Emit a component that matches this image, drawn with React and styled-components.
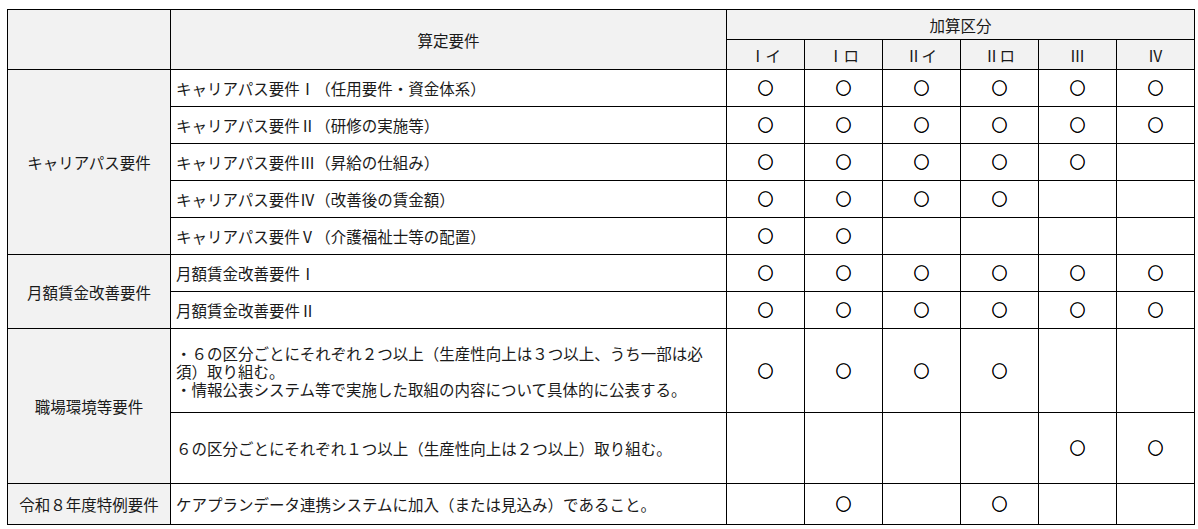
import styled, { createGlobalStyle } from "styled-components";

const GlobalStyle = createGlobalStyle`
  body {
    margin: 0;
    background: #fff;
    font-family: "Noto Sans CJK JP", "Noto Sans", sans-serif;
    color: #1a1a1a;
  }
`;

const COLS = ["Ⅰイ", "Ⅰロ", "Ⅱイ", "Ⅱロ", "Ⅲ", "Ⅳ"];

// marks: indexes of the 加算区分 columns that get a ○
const GROUPS = [
  {
    name: "キャリアパス要件",
    items: [
      { text: "キャリアパス要件Ⅰ（任用要件・資金体系）", marks: [0, 1, 2, 3, 4, 5] },
      { text: "キャリアパス要件Ⅱ（研修の実施等）", marks: [0, 1, 2, 3, 4, 5] },
      { text: "キャリアパス要件Ⅲ（昇給の仕組み）", marks: [0, 1, 2, 3, 4] },
      { text: "キャリアパス要件Ⅳ（改善後の賃金額）", marks: [0, 1, 2, 3] },
      { text: "キャリアパス要件Ⅴ（介護福祉士等の配置）", marks: [0, 1] },
    ],
  },
  {
    name: "月額賃金改善要件",
    items: [
      { text: "月額賃金改善要件Ⅰ", marks: [0, 1, 2, 3, 4, 5] },
      { text: "月額賃金改善要件Ⅱ", marks: [0, 1, 2, 3, 4, 5] },
    ],
  },
  {
    name: "職場環境等要件",
    items: [
      {
        text: [
          "・６の区分ごとにそれぞれ２つ以上（生産性向上は３つ以上、うち一部は必須）取り組む。",
          "・情報公表システム等で実施した取組の内容について具体的に公表する。",
        ],
        marks: [0, 1, 2, 3],
        h: 84,
      },
      {
        text: "６の区分ごとにそれぞれ１つ以上（生産性向上は２つ以上）取り組む。",
        marks: [4, 5],
        h: 71,
      },
    ],
  },
  {
    name: "令和８年度特例要件",
    items: [
      { text: "ケアプランデータ連携システムに加入（または見込み）であること。", marks: [1, 3], h: 41 },
    ],
  },
];

function App() {
  return (
    <Wrap>
      <GlobalStyle />
      <Table>
        <colgroup>
          <col style={{ width: 163 }} />
          <col style={{ width: 556 }} />
          {COLS.map((c) => (
            <col key={c} style={{ width: 78 }} />
          ))}
        </colgroup>
        <thead>
          <Row $h={30}>
            <HeadCell rowSpan={2} />
            <HeadCell rowSpan={2}>算定要件</HeadCell>
            <HeadCell colSpan={6}>加算区分</HeadCell>
          </Row>
          <Row $h={30}>
            {COLS.map((c) => (
              <HeadCell key={c}>{c}</HeadCell>
            ))}
          </Row>
        </thead>
        <tbody>
          {GROUPS.map((g) =>
            g.items.map((it, i) => (
              <Row key={g.name + i} $h={it.h || 37}>
                {i === 0 && <GroupCell rowSpan={g.items.length}>{g.name}</GroupCell>}
                <ItemCell>
                  {Array.isArray(it.text)
                    ? it.text.map((t) => <Line key={t}>{t}</Line>)
                    : it.text}
                </ItemCell>
                {COLS.map((c, j) => (
                  <MarkCell key={c}>{it.marks.includes(j) ? <Mark>○</Mark> : ""}</MarkCell>
                ))}
              </Row>
            ))
          )}
        </tbody>
      </Table>
    </Wrap>
  );
}

export default App;

const Wrap = styled.div`
  padding: 9px 0 0 7px;
`;

const Table = styled.table`
  border-collapse: collapse;
  table-layout: fixed;
  width: 1187px;
  font-size: 15.5px;
  line-height: 18px;

  td,
  th {
    border: 1px solid #000;
    padding: 0 5px;
    vertical-align: middle;
  }
`;

const Row = styled.tr`
  height: ${(p) => p.$h}px;
`;

const HeadCell = styled.th`
  background: #f2f2f2;
  font-weight: normal;
  text-align: center;
`;

const GroupCell = styled.td`
  background: #f2f2f2;
  text-align: center;
`;

const ItemCell = styled.td`
  text-align: left;
`;

const Line = styled.div``;

const MarkCell = styled.td`
  text-align: center;
`;

const Mark = styled.span`
  display: inline-block;
  color: #000;
  -webkit-text-stroke: 0.6px #000;
  transform: translateY(-1px);
`;
